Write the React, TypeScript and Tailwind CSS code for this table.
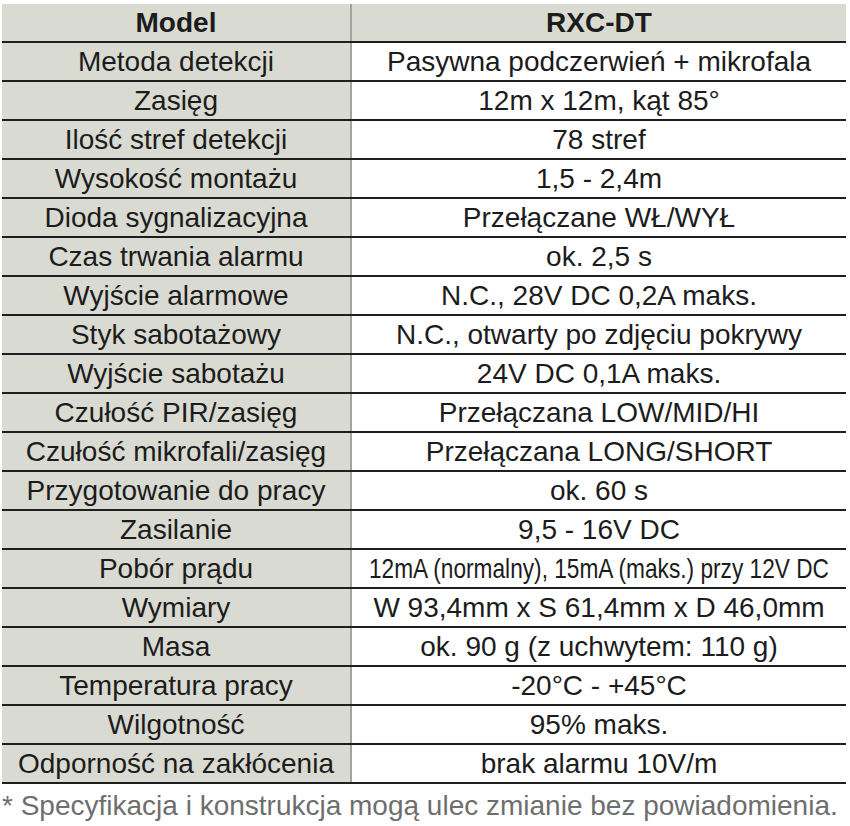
import React from 'react';

const rows: [string, string][] = [
  ['Metoda detekcji', 'Pasywna podczerwień + mikrofala'],
  ['Zasięg', '12m x 12m, kąt 85°'],
  ['Ilość stref detekcji', '78 stref'],
  ['Wysokość montażu', '1,5 - 2,4m'],
  ['Dioda sygnalizacyjna', 'Przełączane WŁ/WYŁ'],
  ['Czas trwania alarmu', 'ok. 2,5 s'],
  ['Wyjście alarmowe', 'N.C., 28V DC 0,2A maks.'],
  ['Styk sabotażowy', 'N.C., otwarty po zdjęciu pokrywy'],
  ['Wyjście sabotażu', '24V DC 0,1A maks.'],
  ['Czułość PIR/zasięg', 'Przełączana LOW/MID/HI'],
  ['Czułość mikrofali/zasięg', 'Przełączana LONG/SHORT'],
  ['Przygotowanie do pracy', 'ok. 60 s'],
  ['Zasilanie', '9,5 - 16V DC'],
  ['Pobór prądu', '12mA (normalny), 15mA (maks.) przy 12V DC'],
  ['Wymiary', 'W 93,4mm x S 61,4mm x D 46,0mm'],
  ['Masa', 'ok. 90 g (z uchwytem: 110 g)'],
  ['Temperatura pracy', '-20°C - +45°C'],
  ['Wilgotność', '95% maks.'],
  ['Odporność na zakłócenia', 'brak alarmu 10V/m'],
];

export default function App() {
  return (
    <div className="w-[850px] h-[826px] bg-white pt-[4px] text-[#1c1c1c]" style={{ fontFamily: '"Liberation Sans", Arial, sans-serif' }}>
      <div className="ml-[2px] w-[844px]">
        <div className="flex h-[39px] border-b-2 border-[#1e1e1e] bg-[#d9dad2]">
          <div className="w-[350px] shrink-0 border-r-2 border-[#a2a39e] flex items-center justify-center text-[28px] font-bold">Model</div>
          <div className="flex-1 min-w-0 flex items-center justify-center text-[28px] font-bold">RXC-DT</div>
        </div>
        {rows.map(([k, v], i) => (
          <div key={i} className="flex h-[39px] border-b-2 border-[#1e1e1e]">
            <div className="w-[350px] shrink-0 bg-[#d9dad2] border-r-2 border-[#a2a39e] flex items-center justify-center text-[28px] whitespace-nowrap">{k}</div>
            <div className="flex-1 min-w-0 flex items-center justify-center text-[28px] whitespace-nowrap">
              {i === 13 ? <span className="inline-block shrink-0 scale-x-[0.81]">{v}</span> : v}
            </div>
          </div>
        ))}
      </div>
      <div className="mt-[6px] pl-[2px] text-[28px] leading-[32px] text-[#6e6e6e] whitespace-nowrap">
        * Specyfikacja i konstrukcja mogą ulec zmianie bez powiadomienia.
      </div>
    </div>
  );
}
